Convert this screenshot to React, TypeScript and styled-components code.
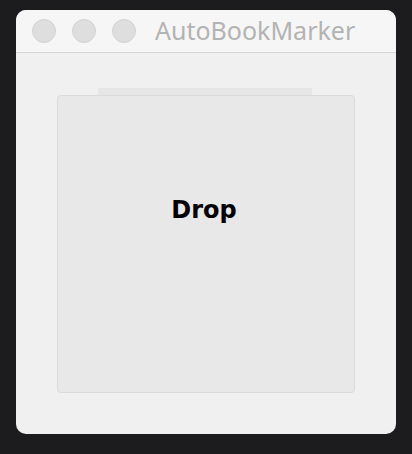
import React from "react";
import styled, { createGlobalStyle } from "styled-components";

const Global = createGlobalStyle`
  html, body { margin: 0; padding: 0; background: #1c1c1e; }
  body { font-family: "Noto Sans", "Liberation Sans", sans-serif; }
`;

const Page = styled.div`
  width: 412px;
  height: 454px;
  box-sizing: border-box;
  padding: 10px 16px 20px;
  background: #1c1c1e;
`;

const Window = styled.div`
  width: 380px;
  height: 424px;
  border-radius: 10px;
  overflow: hidden;
  background: #f0f0f0;
  display: flex;
  flex-direction: column;
`;

const TitleBar = styled.div`
  height: 42px;
  flex: none;
  background: #f6f6f6;
  border-bottom: 1px solid #d6d6d6;
  display: flex;
  align-items: center;
  padding-left: 16px;
`;

const Light = styled.span`
  width: 22px;
  height: 22px;
  border-radius: 50%;
  background: #dedede;
  border: 1px solid #d2d2d2;
  margin-right: 16px;
  flex: none;
`;

const Title = styled.span`
  margin-left: 3px;
  font-family: "Noto Sans", sans-serif;
  font-size: 25px;
  color: #b3b3b3;
  line-height: 1;
  position: relative;
  top: -1px;
`;

const Body = styled.div`
  flex: 1;
  padding: 35px 41px 41px;
  display: flex;
  flex-direction: column;
`;

const Tab = styled.div`
  width: 214px;
  height: 7px;
  margin-left: 41px;
  background: #e6e6e6;
  flex: none;
`;

const DropZone = styled.div`
  height: 298px;
  box-sizing: border-box;
  border: 1px solid #dadada;
  border-radius: 4px;
  background: #e8e8e8;
  display: flex;
  justify-content: center;
  padding-top: 102px;
  padding-right: 4px;
`;

const DropLabel = styled.span`
  font-family: "DejaVu Sans", sans-serif;
  font-weight: bold;
  font-size: 24px;
  color: #000;
  line-height: 1;
`;

export default function App() {
  return (
    <Page>
      <Global />
      <Window>
        <TitleBar>
          <Light />
          <Light />
          <Light />
          <Title>AutoBookMarker</Title>
        </TitleBar>
        <Body>
          <Tab />
          <DropZone>
            <DropLabel>Drop</DropLabel>
          </DropZone>
        </Body>
      </Window>
    </Page>
  );
}
